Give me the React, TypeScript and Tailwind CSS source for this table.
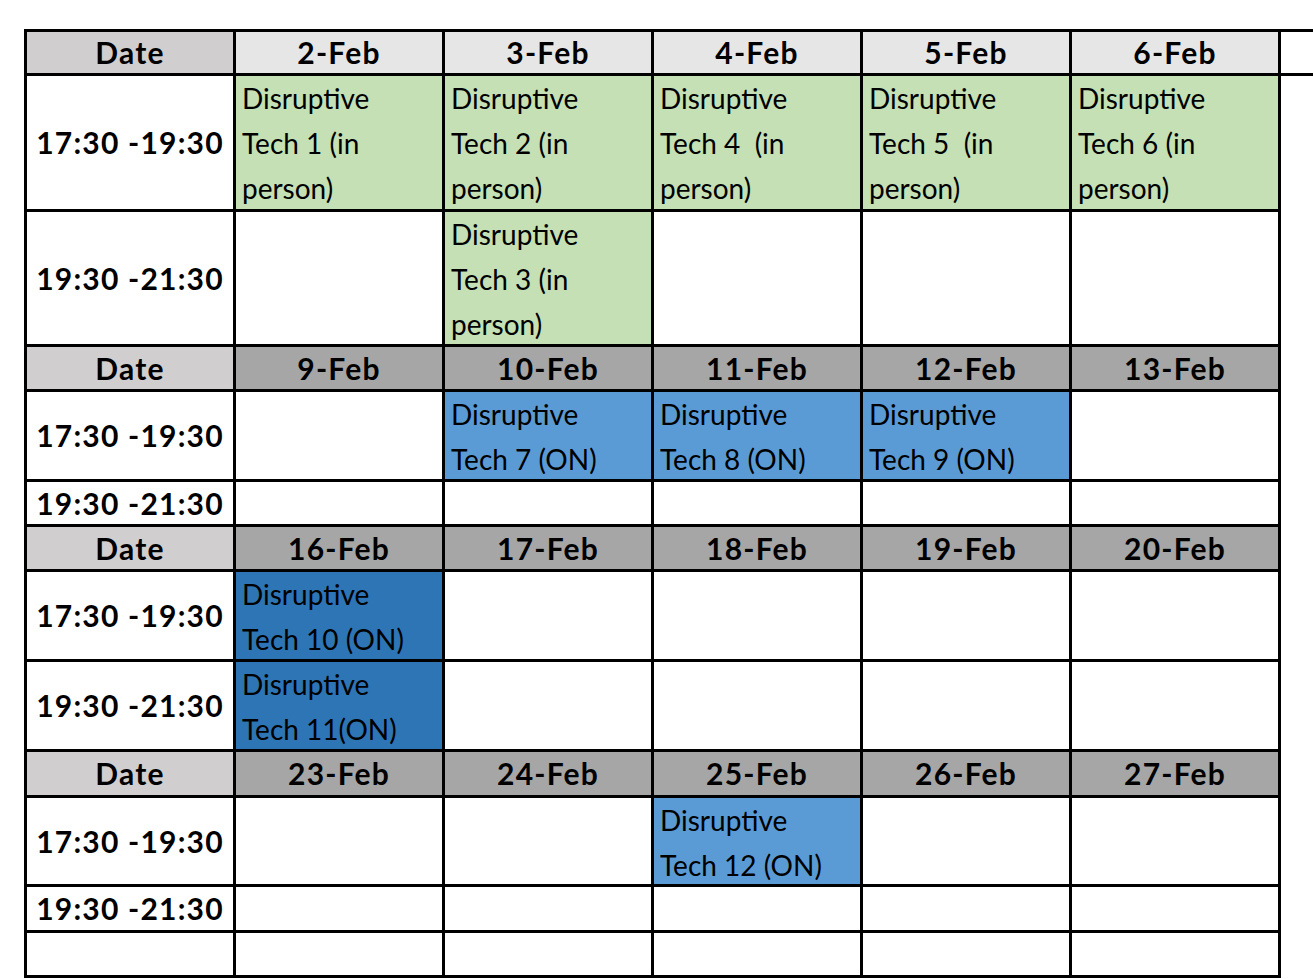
type Cell = { lines?: string[]; tone?: "green" | "blue" | "navy" };

type Row = { label: string; h: string; cells: Cell[] };

type Week = { head: string; headBg: string; dates: string[]; rows: Row[] };

const toneBg: Record<string, string> = {
  green: "bg-[#c5e0b4]",
  blue: "bg-[#5b9bd5]",
  navy: "bg-[#2e75b6]",
};

const dt = (n: string) => ["Disruptive", n];
const blank: Cell = {};

const weeks: Week[] = [
  {
    head: "h-[41px]",
    headBg: "bg-[#e7e6e6]",
    dates: ["2-Feb", "3-Feb", "4-Feb", "5-Feb", "6-Feb"],
    rows: [
      {
        label: "17:30 -19:30",
        h: "h-[133px]",
        cells: [
          { lines: ["Disruptive", "Tech 1 (in", "person)"], tone: "green" },
          { lines: ["Disruptive", "Tech 2 (in", "person)"], tone: "green" },
          { lines: ["Disruptive", "Tech 4  (in", "person)"], tone: "green" },
          { lines: ["Disruptive", "Tech 5  (in", "person)"], tone: "green" },
          { lines: ["Disruptive", "Tech 6 (in", "person)"], tone: "green" },
        ],
      },
      {
        label: "19:30 -21:30",
        h: "h-[132px]",
        cells: [
          blank,
          { lines: ["Disruptive", "Tech 3 (in", "person)"], tone: "green" },
          blank,
          blank,
          blank,
        ],
      },
    ],
  },
  {
    head: "h-[42px]",
    headBg: "bg-[#a6a6a6]",
    dates: ["9-Feb", "10-Feb", "11-Feb", "12-Feb", "13-Feb"],
    rows: [
      {
        label: "17:30 -19:30",
        h: "h-[87px]",
        cells: [
          blank,
          { lines: dt("Tech 7 (ON)"), tone: "blue" },
          { lines: dt("Tech 8 (ON)"), tone: "blue" },
          { lines: dt("Tech 9 (ON)"), tone: "blue" },
          blank,
        ],
      },
      { label: "19:30 -21:30", h: "h-[42px]", cells: [blank, blank, blank, blank, blank] },
    ],
  },
  {
    head: "h-[42px]",
    headBg: "bg-[#a6a6a6]",
    dates: ["16-Feb", "17-Feb", "18-Feb", "19-Feb", "20-Feb"],
    rows: [
      {
        label: "17:30 -19:30",
        h: "h-[87px]",
        cells: [{ lines: dt("Tech 10 (ON)"), tone: "navy" }, blank, blank, blank, blank],
      },
      {
        label: "19:30 -21:30",
        h: "h-[87px]",
        cells: [{ lines: dt("Tech 11(ON)"), tone: "navy" }, blank, blank, blank, blank],
      },
    ],
  },
  {
    head: "h-[43px]",
    headBg: "bg-[#a6a6a6]",
    dates: ["23-Feb", "24-Feb", "25-Feb", "26-Feb", "27-Feb"],
    rows: [
      {
        label: "17:30 -19:30",
        h: "h-[86px]",
        cells: [blank, blank, { lines: dt("Tech 12 (ON)"), tone: "blue" }, blank, blank],
      },
      { label: "19:30 -21:30", h: "h-[43px]", cells: [blank, blank, blank, blank, blank] },
      { label: "", h: "h-[42px]", cells: [blank, blank, blank, blank, blank] },
    ],
  },
];

export default function App() {
  return (
    <div className="min-h-screen bg-white pt-[29px] pl-[24px] font-['Lato',sans-serif] text-black">
      <div className="flex items-start">
        <div className="grid grid-cols-[repeat(6,206px)] gap-[3px] bg-black p-[3px]">
          {weeks.map((w, wi) => (
            <Week key={wi} week={w} />
          ))}
        </div>
        <div className="h-[47px] flex-1 border-y-[3px] border-black" />
      </div>
    </div>
  );
}

function Week({ week }: { week: Week }) {
  return (
    <>
      <div
        className={`${week.head} flex items-center justify-center bg-[#d0cece] text-[30px] font-bold tracking-[1.2px]`}
      >
        Date
      </div>
      {week.dates.map((d) => (
        <div
          key={d}
          className={`${week.head} ${week.headBg} flex items-center justify-center text-[30px] font-bold tracking-[1.2px]`}
        >
          {d}
        </div>
      ))}
      {week.rows.map((r, ri) => (
        <RowCells key={ri} row={r} />
      ))}
    </>
  );
}

function RowCells({ row }: { row: Row }) {
  return (
    <>
      <div
        className={`${row.h} flex items-center justify-center bg-white text-[30px] font-bold tracking-[1.2px] whitespace-nowrap`}
      >
        {row.label}
      </div>
      {row.cells.map((c, i) => (
        <div
          key={i}
          className={`${row.h} overflow-hidden pl-[6px] text-[28px] leading-[45px] whitespace-pre ${
            c.tone ? toneBg[c.tone] : "bg-white"
          }`}
        >
          {c.lines?.map((l, li) => (
            <div key={li}>{l}</div>
          ))}
        </div>
      ))}
    </>
  );
}
